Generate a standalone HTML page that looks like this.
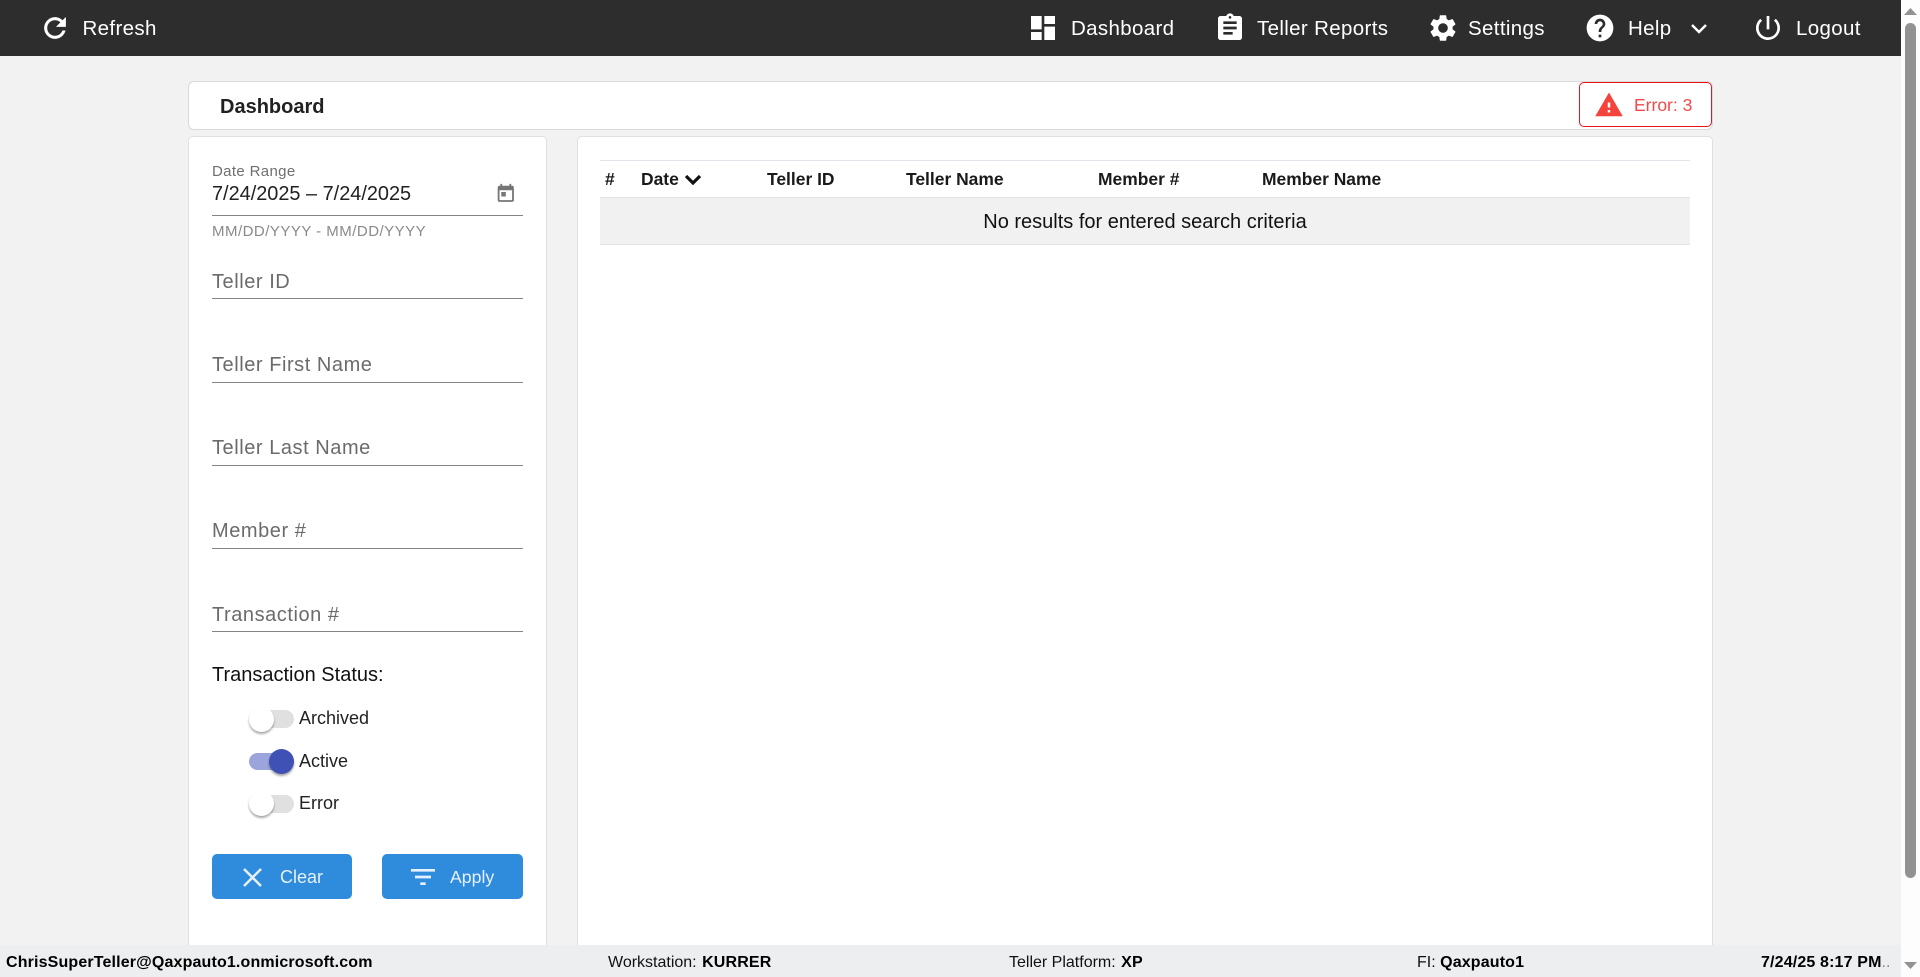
<!DOCTYPE html>
<html><head><meta charset="utf-8"><title>Dashboard</title>
<style>
html,body{margin:0;padding:0;width:1920px;height:977px;overflow:hidden;background:#f2f2f2;font-family:"Liberation Sans",Arial,sans-serif;}
.a{position:absolute;white-space:nowrap;}
svg{position:absolute;display:block;}
.t{position:absolute;white-space:nowrap;line-height:24px;height:24px;}
.nav{color:#fff;font-size:20.5px;letter-spacing:.35px;top:17px;}
.card{position:absolute;background:#fff;box-sizing:border-box;border:1px solid #e0e0e0;border-radius:5px;}
.ph{color:#6b6b6b;font-size:20px;letter-spacing:.55px;left:212px;}
.ln{position:absolute;left:212px;width:311px;height:1px;background:#858585;}
.th{font-weight:bold;font-size:17.45px;color:#1a1a1a;top:167px;}
.track{position:absolute;left:249px;width:45px;height:18px;border-radius:9px;background:#e0e0e0;}
.thumb{position:absolute;width:25px;height:25px;border-radius:50%;background:#fff;box-shadow:0 2px 2px rgba(0,0,0,.35);}
.sl{font-size:18px;color:#222;left:299px;}
.btn{position:absolute;top:854px;height:45px;background:#2f8bdc;border-radius:5px;}
.bt{color:#e6f1fb;font-size:18px;top:865px;}
.ft{font-size:16px;color:#111;top:951px;}
.ft b{color:#000;letter-spacing:.15px;margin-left:1px;}
</style></head>
<body>
<!-- header -->
<div class="a" style="left:0;top:0;width:1901px;height:56px;background:#2d2d2d;"></div>
<svg style="left:39px;top:12px" width="32" height="32" viewBox="0 0 24 24" fill="#fff" stroke="#fff" stroke-width=".3"><path d="M17.65 6.35C16.2 4.9 14.21 4 12 4c-4.42 0-7.99 3.58-7.99 8s3.57 8 7.99 8c3.73 0 6.84-2.55 7.73-6h-2.08c-.82 2.33-3.04 4-5.65 4-3.31 0-6-2.69-6-6s2.69-6 6-6c1.66 0 3.14.69 4.22 1.78L13 11h7V4l-2.35 2.35z"/></svg>
<div class="t nav" style="left:82.5px">Refresh</div>

<svg style="left:1027px;top:12px" width="32" height="32" viewBox="0 0 24 24" fill="#fff"><path d="M3 13h8V3H3v10zm0 8h8v-6H3v6zm10 0h8V11h-8v10zm0-18v6h8V3h-8z"/></svg>
<div class="t nav" style="left:1071px">Dashboard</div>
<svg style="left:1214px;top:12px" width="32" height="32" viewBox="0 0 24 24" fill="#fff"><path d="M19 3h-4.18C14.4 1.84 13.3 1 12 1c-1.3 0-2.4.84-2.82 2H5c-1.1 0-2 .9-2 2v14c0 1.1.9 2 2 2h14c1.1 0 2-.9 2-2V5c0-1.1-.9-2-2-2zm-7 0c.55 0 1 .45 1 1s-.45 1-1 1-1-.45-1-1 .45-1 1-1zm2 14H7v-2h7v2zm3-4H7v-2h10v2zm0-4H7V7h10v2z"/></svg>
<div class="t nav" style="left:1257px">Teller Reports</div>
<svg style="left:1427px;top:12px" width="32" height="32" viewBox="0 0 24 24" fill="#fff"><path d="M19.14 12.94c.04-.3.06-.61.06-.94 0-.32-.02-.64-.07-.94l2.03-1.58c.18-.14.23-.41.12-.61l-1.92-3.32c-.12-.22-.37-.29-.59-.22l-2.39.96c-.5-.38-1.03-.7-1.62-.94l-.36-2.54c-.04-.24-.24-.41-.48-.41h-3.84c-.24 0-.43.17-.47.41l-.36 2.54c-.59.24-1.13.57-1.62.94l-2.39-.96c-.22-.08-.47 0-.59.22L2.74 8.87c-.12.21-.08.47.12.61l2.03 1.58c-.05.3-.09.63-.09.94s.02.64.07.94l-2.03 1.58c-.18.14-.23.41-.12.61l1.92 3.32c.12.22.37.29.59.22l2.39-.96c.5.38 1.03.7 1.62.94l.36 2.54c.05.24.24.41.48.41h3.84c.24 0 .44-.17.47-.41l.36-2.54c.59-.24 1.13-.56 1.62-.94l2.39.96c.22.08.47 0 .59-.22l1.92-3.32c.12-.22.07-.47-.12-.61l-2.01-1.58zM12 15.6c-1.98 0-3.6-1.62-3.6-3.6s1.62-3.6 3.6-3.6 3.6 1.62 3.6 3.6-1.62 3.6-3.6 3.6z"/></svg>
<div class="t nav" style="left:1468px">Settings</div>
<svg style="left:1584px;top:12px" width="32" height="32" viewBox="0 0 24 24" fill="#fff"><path d="M12 2C6.48 2 2 6.48 2 12s4.48 10 10 10 10-4.48 10-10S17.52 2 12 2zm1 17h-2v-2h2v2zm2.07-7.75l-.9.92C13.45 12.9 13 13.5 13 15h-2v-.5c0-1.1.45-2.1 1.17-2.83l1.24-1.26c.37-.36.59-.86.59-1.41 0-1.1-.9-2-2-2s-2 .9-2 2H8c0-2.21 1.79-4 4-4s4 1.79 4 4c0 .88-.36 1.68-.93 2.25z"/></svg>
<div class="t nav" style="left:1628px">Help</div>
<svg style="left:1689px;top:21px" width="20" height="14" viewBox="0 0 20 14" fill="none" stroke="#fff" stroke-width="2.4"><path d="M3 4l7 7 7-7"/></svg>
<svg style="left:1752px;top:12px" width="32" height="32" viewBox="0 0 24 24" fill="#fff"><path d="M13 3h-2v10h2V3zm4.83 2.17l-1.42 1.42C17.99 7.86 19 9.81 19 12c0 3.87-3.13 7-7 7s-7-3.13-7-7c0-2.19 1.01-4.14 2.58-5.42L6.17 5.17C4.23 6.82 3 9.26 3 12c0 4.97 4.03 9 9 9s9-4.03 9-9c0-2.74-1.23-5.18-3.17-6.83z"/></svg>
<div class="t nav" style="left:1796px">Logout</div>

<!-- title bar -->
<div class="card" style="left:188px;top:81px;width:1525px;height:49px;border-color:#dadada;border-radius:6px;"></div>
<div class="t" style="left:220px;top:95px;font-size:20px;font-weight:bold;color:#212121;">Dashboard</div>
<div class="a" style="left:1579px;top:82px;width:133px;height:45px;box-sizing:border-box;background:#fff;border:1px solid #e8141c;border-radius:5px;"></div>
<svg style="left:1594px;top:90px" width="30" height="30" viewBox="0 0 24 24" fill="#f4433c"><path d="M1 21h22L12 2 1 21zm12-3h-2v-2h2v2zm0-4h-2v-4h2v4z"/></svg>
<div class="t" style="left:1634px;top:93px;font-size:17.5px;color:#f4474a;">Error: 3</div>

<!-- left card -->
<div class="card" style="left:188px;top:136px;width:359px;height:830px;"></div>
<div class="t" style="left:212px;top:160px;font-size:15px;letter-spacing:.35px;color:#6f6f6f;">Date Range</div>
<div class="t" style="left:212px;top:182px;font-size:19.9px;color:#212121;">7/24/2025 – 7/24/2025</div>
<svg style="left:495px;top:183px" width="21.6" height="21.6" viewBox="0 0 24 24" fill="#757575"><path d="M19 3h-1V1h-2v2H8V1H6v2H5c-1.11 0-1.99.9-1.99 2L3 19c0 1.1.89 2 2 2h14c1.1 0 2-.9 2-2V5c0-1.1-.9-2-2-2zm0 16H5V8h14v11zM7 10h5v5H7z"/></svg>
<div class="ln" style="top:215px"></div>
<div class="t" style="left:212px;top:220px;font-size:15px;letter-spacing:.48px;color:#8a8a8a;">MM/DD/YYYY - MM/DD/YYYY</div>

<div class="t ph" style="top:270px">Teller ID</div><div class="ln" style="top:298px"></div>
<div class="t ph" style="top:353px">Teller First Name</div><div class="ln" style="top:382px"></div>
<div class="t ph" style="top:436px">Teller Last Name</div><div class="ln" style="top:465px"></div>
<div class="t ph" style="top:519px">Member #</div><div class="ln" style="top:548px"></div>
<div class="t ph" style="top:603px">Transaction #</div><div class="ln" style="top:631px"></div>

<div class="t" style="left:212px;top:663px;font-size:20px;color:#111;">Transaction Status:</div>

<div class="track" style="top:710px"></div><div class="thumb" style="left:249px;top:707px"></div>
<div class="t sl" style="top:706px">Archived</div>
<div class="track" style="top:753px;height:17px;background:#9ca4dc"></div><div class="thumb" style="left:269px;top:749px;background:#3f51b5"></div>
<div class="t sl" style="top:749px">Active</div>
<div class="track" style="top:795px"></div><div class="thumb" style="left:249px;top:791px"></div>
<div class="t sl" style="top:791px">Error</div>

<div class="btn" style="left:212px;width:140px"></div>
<svg style="left:241px;top:866px" width="23" height="23" viewBox="0 0 23 23" fill="none" stroke="#e6f1fb" stroke-width="2.5"><path d="M3 3l17 17M20 3L3 20"/></svg>
<div class="t bt" style="left:280px">Clear</div>
<div class="btn" style="left:382px;width:141px"></div>
<svg style="left:407px;top:861px" width="32" height="32" viewBox="0 0 24 24" fill="#e6f1fb"><path d="M10 18h4v-2h-4v2zM3 6v2h18V6H3zm3 7h12v-2H6v2z"/></svg>
<div class="t bt" style="left:450px;font-size:17.7px">Apply</div>

<!-- right card -->
<div class="card" style="left:577px;top:136px;width:1136px;height:830px;"></div>
<div class="a" style="left:600px;top:160px;width:1090px;height:1px;background:#e3e4ea;"></div>
<div class="t th" style="left:605px">#</div>
<div class="t th" style="left:641px">Date</div>
<svg style="left:683px;top:172px" width="20" height="15" viewBox="0 0 20 15" fill="none" stroke="#111" stroke-width="3.2"><path d="M3 4l7 7 7-7"/></svg>
<div class="t th" style="left:767px">Teller ID</div>
<div class="t th" style="left:906px">Teller Name</div>
<div class="t th" style="left:1098px">Member #</div>
<div class="t th" style="left:1262px">Member Name</div>
<div class="a" style="left:600px;top:197px;width:1090px;height:48px;box-sizing:border-box;background:#f1f1f1;border-top:1px solid #e3e4ea;border-bottom:1px solid #e3e4ea;"></div>
<div class="t" style="left:600px;width:1090px;text-align:center;top:210px;font-size:20px;color:#111;">No results for entered search criteria</div>

<!-- footer -->
<div class="a" style="left:0;top:945px;width:1901px;height:32px;background:#eceef0;"></div>
<div class="t ft" style="left:6px;font-weight:bold;color:#000;letter-spacing:.15px">ChrisSuperTeller@Qaxpauto1.onmicrosoft.com</div>
<div class="t ft" style="left:608px">Workstation: <b>KURRER</b></div>
<div class="t ft" style="left:1009px">Teller Platform: <b>XP</b></div>
<div class="t ft" style="left:1417px">FI: <b style="margin-left:0">Qaxpauto1</b></div>
<div class="t ft" style="left:1760px"><b>7/24/25 8:17 PM</b><span style="color:#888">..</span></div>

<!-- scrollbar -->
<div class="a" style="left:1901px;top:0;width:19px;height:977px;background:#fdfdfd;"></div>
<div class="a" style="left:1905px;top:23px;width:11px;height:855px;border-radius:6px;background:#929292;"></div>
<svg style="left:1904px;top:8px" width="13" height="7" viewBox="0 0 13 7" fill="#929292"><path d="M6.5 0L13 7H0z"/></svg>
<svg style="left:1904px;top:962px" width="13" height="7" viewBox="0 0 13 7" fill="#929292"><path d="M0 0h13L6.5 7z"/></svg>
</body></html>
